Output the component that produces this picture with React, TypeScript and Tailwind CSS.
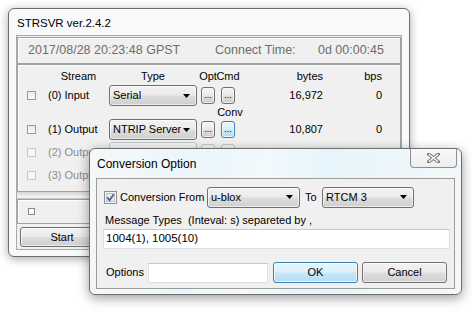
import React from "react";

/* ── Win7-ish controls ─────────────────────────────────── */
const BTN =
  "border border-[#707070] rounded-[3px] bg-[linear-gradient(#f2f2f2,#ebebeb_48%,#dddddd_52%,#cfcfcf)] shadow-[inset_0_0_0_1px_rgba(255,255,255,0.6)]";
const BTN_BLUE =
  "border border-[#3c7fb1] rounded-[3px] bg-[linear-gradient(#e8f5fc,#dbf0fb_48%,#c6e7f8_52%,#b5ddf3)] shadow-[inset_0_0_0_1px_rgba(255,255,255,0.7)]";

function Caret() {
  return (
    <svg width="7" height="4" viewBox="0 0 7 4">
      <path d="M0 0h7L3.5 4z" fill="#000" />
    </svg>
  );
}

function Select({ value, w, disabled }: { value?: string; w: string; disabled?: boolean }) {
  return (
    <div
      className={`h-[21px] ${w} flex items-center justify-between pl-[3px] pr-[6px] rounded-[3px] ${
        disabled ? "border border-[#c3c6c9] bg-[#f4f4f4]" : BTN
      }`}
    >
      <span className="whitespace-nowrap">{value}</span>
      {!disabled && <Caret />}
    </div>
  );
}

function Dots({ blue, disabled }: { blue?: boolean; disabled?: boolean }) {
  const cls = disabled
    ? "border border-[#c3c6c9] rounded-[3px] bg-[#f4f4f4]"
    : blue
    ? BTN_BLUE
    : BTN;
  return (
    <div className={`w-[14px] h-[17px] flex items-end justify-center pb-[3px] text-[9px] leading-none ${cls}`}>
      {disabled ? "" : "..."}
    </div>
  );
}

function Box({ disabled }: { disabled?: boolean }) {
  return (
    <div
      className={`w-[9px] h-[9px] border ${
        disabled ? "border-[#c8c8c8] bg-[#f6f6f6]" : "border-[#9a9a9a] bg-[linear-gradient(#e8e8e8,#fbfbfb)]"
      }`}
    />
  );
}

interface Row { label: string; type?: string; bytes?: string; bps?: string; off?: boolean; conv?: boolean; }

const rows: Row[] = [
  { label: "(0) Input", type: "Serial", bytes: "16,972", bps: "0" },
  { label: "(1) Output", type: "NTRIP Server", bytes: "10,807", bps: "0", conv: true },
  { label: "(2) Output", off: true },
  { label: "(3) Output", off: true },
];

function StreamRow({ r }: { r: Row }) {
  return (
    <div className="h-[21px] flex items-center pl-[9px]">
      <Box disabled={r.off} />
      <span className={`ml-[12px] w-[61px] whitespace-nowrap ${r.off ? "text-[#8d8d8d]" : ""}`}>{r.label}</span>
      <Select value={r.type} w="w-[88px]" disabled={r.off} />
      <div className="ml-[4px]"><Dots disabled={r.off} /></div>
      <div className="ml-[6px]"><Dots disabled={r.off} blue={r.conv} /></div>
      <span className="w-[88px] text-right">{r.bytes}</span>
      <span className="w-[59px] text-right">{r.bps}</span>
    </div>
  );
}

/* ── Main window ───────────────────────────────────────── */
function MainWindow() {
  return (
    <div className="absolute left-[8px] top-[8px] w-[402px] h-[249px] rounded-[6px] border border-[#6e6e6e] bg-[#f8f9fa] shadow-[0_2px_10px_rgba(0,0,0,0.35)] px-[7px] pb-[6px] flex flex-col">
      <div className="h-[26px] flex items-center pt-[3px] pl-[1px] text-[11.5px]">STRSVR ver.2.4.2</div>
      <div className="flex-1 border border-[#a9a9a9] bg-[#f0f0f0] flex flex-col text-[11px]">
        {/* status */}
        <div className="h-[27px] mt-[1px] border border-[#a0a0a0] shadow-[inset_1px_1px_0_#fff] flex items-center pl-[10px] pr-[16px] text-[12.5px] text-[#6d6d6d]">
          <span className="w-[187px] whitespace-nowrap">2017/08/28 20:23:48 GPST</span>
          <span className="whitespace-nowrap">Connect Time:</span>
          <span className="flex-1 text-right whitespace-nowrap">0d 00:00:45</span>
        </div>

        {/* streams */}
        <div className="h-[128px] border border-[#a0a0a0] shadow-[inset_1px_1px_0_#fff] pt-[3px] flex flex-col">
          <div className="h-[16px] flex items-center pl-[30px]">
            <span className="w-[61px] text-center">Stream</span>
            <span className="w-[88px] text-center">Type</span>
            <span className="ml-[4px] w-[14px] flex justify-center whitespace-nowrap">Opt</span>
            <span className="ml-[6px] w-[14px] flex justify-center whitespace-nowrap">Cmd</span>
            <span className="w-[88px] text-right">bytes</span>
            <span className="w-[59px] text-right">bps</span>
          </div>
          <div className="mt-[1px]"><StreamRow r={rows[0]} /></div>
          <div className="h-[13px] flex items-center pl-[205px]">
            <span className="w-[14px] flex justify-center whitespace-nowrap">Conv</span>
          </div>
          <StreamRow r={rows[1]} />
          <div className="mt-[2px]"><StreamRow r={rows[2]} /></div>
          <div className="mt-[2px]"><StreamRow r={rows[3]} /></div>
        </div>

        {/* splitter */}
        <div className="h-[7px] bg-[linear-gradient(#d4d4d4,#ececec_60%,#f6f6f6)] border-b border-[#c8c8c8]" />

        {/* bottom panel */}
        <div className="h-[25px] border border-[#a0a0a0] shadow-[inset_1px_1px_0_#fff] flex items-center pl-[10px]">
          <div className="w-[7px] h-[7px] border border-[#8a8a8a] bg-white" />
        </div>

        <div className="mt-[3px] flex pl-[3px]">
          <div className={`w-[84px] h-[20px] flex items-center justify-center ${BTN}`}>Start</div>
        </div>
      </div>
    </div>
  );
}

/* ── Conversion dialog ─────────────────────────────────── */
function CloseX() {
  return (
    <svg width="13" height="10" viewBox="0 0 13 10">
      <path d="M1.5 1 L11.5 9 M11.5 1 L1.5 9" stroke="#7b7b7b" strokeWidth="3.4" strokeLinecap="square" />
      <path d="M1.8 1.2 L11.2 8.8 M11.2 1.2 L1.8 8.8" stroke="#ffffff" strokeWidth="1.3" />
    </svg>
  );
}

function CheckOn() {
  return (
    <svg width="13" height="13" viewBox="0 0 13 13">
      <rect x="0.5" y="0.5" width="12" height="12" fill="#f6f6f6" stroke="#8e8f8f" />
      <rect x="2.5" y="2.5" width="8" height="8" fill="#e4ebf3" stroke="#b9c3cf" />
      <path d="M3.3 6.3 L5.5 9.2 L9.8 3.2" fill="none" stroke="#4b5f96" strokeWidth="1.8" />
    </svg>
  );
}

function Dialog() {
  return (
    <div className="absolute left-[89px] top-[148px] w-[373px] h-[147px] rounded-[6px] border border-[#6e6e6e] bg-[linear-gradient(100deg,#f6f8f9,#eaf6fb_30%,#f3f9fc_45%,#e6f5fb_60%,#f6f8f9)] shadow-[0_3px_12px_rgba(0,0,0,0.4)] px-[6px] pb-[5px] flex flex-col">
      <div className="h-[29px] flex">
        <span className="self-center pl-[1px] text-[12px] whitespace-nowrap">Conversion Option</span>
        <div className="ml-auto -mr-[2px] w-[47px] h-[19px] border-x border-b border-[#8d8d8d] rounded-b-[4px] bg-[linear-gradient(#f8f8f8,#eeeeee)] flex items-center justify-center">
          <CloseX />
        </div>
      </div>
      <div className="flex-1 border border-[#9c9c9c] bg-[#f0f0f0] flex flex-col text-[11px]">
        <div className="mt-[8px] h-[20px] flex items-center pl-[7px]">
          <CheckOn />
          <span className="ml-[3px] w-[87px] whitespace-nowrap">Conversion From</span>
          <Select value="u-blox" w="w-[93px]" />
          <span className="ml-[5px] w-[17px]">To</span>
          <Select value="RTCM 3" w="w-[92px]" />
        </div>
        <div className="mt-[6px] h-[14px] flex items-center pl-[8px] whitespace-pre">
          Message Types  (Inteval: s) separeted by ,
        </div>
        <div className="mt-[2px] ml-[6px] w-[347px] h-[20px] bg-white border border-[#dcdfe3] border-t-[#c5c9ce] flex items-center pl-[2px] text-[11.5px]">
          1004(1), 1005(10)
        </div>
        <div className="mt-[13px] h-[21px] flex items-center pl-[9px]">
          <span className="w-[42px]">Options</span>
          <div className="w-[120px] h-[20px] bg-white border border-[#dcdfe3] border-t-[#c5c9ce]" />
          <div className={`ml-[5px] w-[85px] h-[21px] flex items-center justify-center ${BTN_BLUE}`}>OK</div>
          <div className={`ml-[4px] w-[85px] h-[21px] flex items-center justify-center ${BTN}`}>Cancel</div>
        </div>
      </div>
    </div>
  );
}

export default function App() {
  return (
    <div className="relative w-[472px] h-[311px] bg-white overflow-hidden text-black font-['Liberation_Sans',Arial,sans-serif]">
      <MainWindow />
      <Dialog />
    </div>
  );
}
